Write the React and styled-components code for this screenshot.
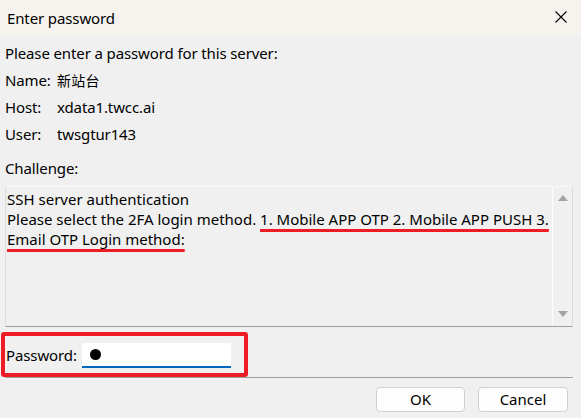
import React from "react";
import styled, { createGlobalStyle } from "styled-components";

const GlobalStyle = createGlobalStyle`
  html, body {
    margin: 0;
    padding: 0;
    background: #f0f0f0;
  }
  * {
    box-sizing: border-box;
  }
`;

const Window = styled.div`
  width: 581px;
  height: 418px;
  display: flex;
  flex-direction: column;
  background: #f0f0f0;
  font-family: "Noto Sans", "Noto Sans CJK TC", sans-serif;
  font-size: 15px;
  letter-spacing: -0.12px;
  color: #000;
  overflow: hidden;
`;

const TitleBar = styled.div`
  height: 35px;
  flex-shrink: 0;
  display: flex;
  align-items: center;
  justify-content: space-between;
  padding: 0 14px 0 7px;
  background: #f6f3ef;
  font-size: 15px;
`;

const CloseButton = styled.div`
  width: 12px;
  height: 12px;
  display: flex;
  margin-top: -1px;
`;

const Body = styled.div`
  display: flex;
  flex-direction: column;
  padding: 4px 8px 0 5px;
`;

const Line = styled.div`
  height: 27px;
  display: flex;
  align-items: center;
  white-space: nowrap;
  margin-top: ${(p) => p.$gap || 0}px;
`;

const InfoGrid = styled.div`
  display: grid;
  grid-template-columns: 52px 1fr;
  grid-auto-rows: 27px;
  align-items: center;
`;

const Cjk = styled.span`
  font-family: "Noto Sans CJK TC", sans-serif;
  font-size: 14px;
  letter-spacing: 0.3px;
`;

const Challenge = styled.div`
  margin-top: 5px;
  height: 141px;
  display: flex;
  border: 1px solid #dcdcdc;
  border-top-color: #f8f8f8;
  border-bottom-color: #a0a0a0;
`;

const ChallengeText = styled.div`
  flex: 1;
  padding: 2px 0 0 1px;
  line-height: 20px;
  letter-spacing: 0;
  white-space: nowrap;
  overflow: hidden;
`;

const Marked = styled.span`
  text-decoration: underline;
  text-decoration-color: #ee1c25;
  text-decoration-thickness: 3px;
  text-underline-offset: 4px;
  text-decoration-skip-ink: none;
`;

const ScrollBar = styled.div`
  width: 20px;
  border-left: 1px solid #fdfdfd;
  display: flex;
  flex-direction: column;
  justify-content: space-between;
  align-items: center;
  padding: 8px 0 9px;
`;

const Arrow = styled.div`
  width: 0;
  height: 0;
  border-left: 5px solid transparent;
  border-right: 5px solid transparent;
  ${(p) =>
    p.$down
      ? "border-top: 6px solid #a3a3a3;"
      : "border-bottom: 6px solid #a3a3a3;"}
`;

const Highlight = styled.div`
  margin: 5px 0 0 -4px;
  width: 247px;
  height: 45px;
  border: 4px solid #ee1c25;
  border-radius: 3px;
  display: flex;
  align-items: center;
  gap: 5px;
  padding: 0 0 0 1px;
`;

const PasswordField = styled.div`
  width: 149px;
  height: 25px;
  margin-top: 2px;
  background: #fff;
  border-bottom: 2px solid #0067c0;
  display: flex;
  align-items: center;
  padding-left: 8px;
`;

const Dot = styled.span`
  width: 11px;
  height: 11px;
  border-radius: 50%;
  background: #000;
`;

const Separator = styled.div`
  height: 1px;
  background: #a0a0a0;
`;

const Buttons = styled.div`
  display: flex;
  justify-content: flex-end;
  gap: 13px;
  padding: 9px 5px 0 0;
`;

const Button = styled.button`
  width: ${(p) => p.$w}px;
  height: 25px;
  background: #fdfdfd;
  border: 1px solid #d0d0d0;
  border-radius: 4px;
  font-family: inherit;
  font-size: 15px;
  color: #000;
  padding: 0;
  line-height: 1;
`;

export default function App() {
  return (
    <Window>
      <GlobalStyle />
      <TitleBar>
        <span>Enter password</span>
        <CloseButton>
          <svg width="12" height="12" viewBox="0 0 12 12">
            <path d="M0.5 0.5L11.5 11.5M11.5 0.5L0.5 11.5" stroke="#000" strokeWidth="1.1" />
          </svg>
        </CloseButton>
      </TitleBar>
      <Body>
        <Line>Please enter a password for this server:</Line>
        <InfoGrid>
          <span>Name:</span>
          <Cjk>新站台</Cjk>
          <span>Host:</span>
          <span>xdata1.twcc.ai</span>
          <span>User:</span>
          <span>twsgtur143</span>
        </InfoGrid>
        <Line $gap={7}>Challenge:</Line>
        <Challenge>
          <ChallengeText>
            <div>SSH server authentication</div>
            <div>
              Please select the 2FA login method.{" "}
              <Marked>1. Mobile APP OTP 2. Mobile APP PUSH 3.</Marked>
            </div>
            <div>
              <Marked>Email OTP Login method:</Marked>
            </div>
          </ChallengeText>
          <ScrollBar>
            <Arrow />
            <Arrow $down />
          </ScrollBar>
        </Challenge>
        <Highlight>
          <span>Password:</span>
          <PasswordField>
            <Dot />
          </PasswordField>
        </Highlight>
        <Separator />
        <Buttons>
          <Button $w={89}>OK</Button>
          <Button $w={90}>Cancel</Button>
        </Buttons>
      </Body>
    </Window>
  );
}
